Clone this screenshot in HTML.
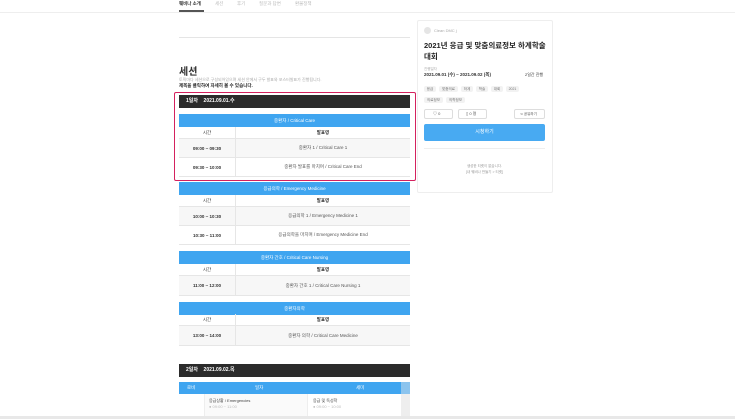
<!DOCTYPE html>
<html><head><meta charset="utf-8"><style>
*{margin:0;padding:0;box-sizing:border-box}
body{width:735px;height:419px;overflow:hidden;background:#fff;font-family:"Liberation Sans","Noto Sans CJK KR",sans-serif;position:relative;color:#222}
.a{position:absolute}
.blk{position:absolute;left:179px;width:231px;height:13px;background:#2b2b2b;color:#fff;font-size:5px;font-weight:bold;line-height:13px;padding-left:7px}
.blu{position:absolute;left:179px;width:231px;height:13px;background:#3fa5f0;color:#fff;font-size:4.5px;line-height:13px;text-align:center}
.row{position:absolute;left:179px;width:231px;font-size:4.5px;color:#555;border-bottom:1px solid #e6e6e6}
.row .t{position:absolute;left:0;width:57px;text-align:center;top:0;bottom:0;border-right:1px solid #e6e6e6;display:flex;align-items:center;justify-content:center;font-weight:bold;color:#333}
.row .n{position:absolute;left:57px;right:0;top:0;bottom:0;display:flex;align-items:center;justify-content:center}
.hd .n{font-weight:bold;color:#333}.hd .t{font-weight:normal}
.bg{background:#f7f7f7}
.tag{position:absolute;height:6px;font-size:3.5px;line-height:6px;color:#777;background:#f2f2f2;border-radius:2px;text-align:center}
</style></head><body>
<div class="a" style="left:0;top:12px;width:735px;border-top:1px solid #eee"></div>
<div class="a" style="left:179px;top:1px;font-size:4.5px;color:#333;font-weight:bold">웨비나 소개</div>
<div class="a" style="left:179px;top:10px;width:25px;height:2px;background:#555"></div>
<div class="a" style="left:215px;top:1px;font-size:4.5px;color:#bbb">세션</div>
<div class="a" style="left:237px;top:1px;font-size:4.5px;color:#bbb">후기</div>
<div class="a" style="left:259px;top:1px;font-size:4.5px;color:#bbb">질문과 답변</div>
<div class="a" style="left:295px;top:1px;font-size:4.5px;color:#bbb">환불정책</div>
<div class="a" style="left:179px;top:37px;width:231px;border-top:1px solid #e5e5e5"></div>
<div class="a" style="left:179px;top:63px;font-size:10px;font-weight:bold;color:#333">세션</div>
<div class="a" style="left:179px;top:77px;font-size:4px;color:#aaa">토픽마다 세션으로 구성되어있으며 세션 안에서 구두 발표와 포스터발표가 진행됩니다.</div>
<div class="a" style="left:179px;top:83px;font-size:4.5px;font-weight:bold;color:#222">제목을 클릭하여 자세히 볼 수 있습니다.</div>
<div class="a" style="left:174px;top:92px;width:242px;height:89px;border:1.5px solid #d4215e;border-radius:2px"></div>

<div class="blk" style="top:95px">1일차 &nbsp;&nbsp; 2021.09.01.수</div>
<div class="blu" style="top:114px">중환자 / Critical Care</div>
<div class="row hd" style="top:127px;height:12px"><div class="t">시간</div><div class="n">발표명</div></div>
<div class="row bg" style="top:139px;height:19px"><div class="t">09:00 ~ 09:30</div><div class="n">중환자 1 / Critical Care 1</div></div>
<div class="row" style="top:158px;height:19px"><div class="t">09:30 ~ 10:00</div><div class="n">중환자 발표를 마치며 / Critical Care End</div></div>

<div class="blu" style="top:182px">응급의학 / Emergency Medicine</div>
<div class="row hd" style="top:195px;height:12px"><div class="t">시간</div><div class="n">발표명</div></div>
<div class="row bg" style="top:207px;height:19px"><div class="t">10:00 ~ 10:30</div><div class="n">응급의학 1 / Emergency Medicine 1</div></div>
<div class="row" style="top:226px;height:19px"><div class="t">10:30 ~ 11:00</div><div class="n">응급의학을 마치며 / Emergency Medicine End</div></div>

<div class="blu" style="top:251px">중환자 간호 / Critical Care Nursing</div>
<div class="row hd" style="top:264px;height:12px"><div class="t">시간</div><div class="n">발표명</div></div>
<div class="row bg" style="top:276px;height:20px"><div class="t">11:00 ~ 12:00</div><div class="n">중환자 간호 1 / Critical Care Nursing 1</div></div>

<div class="blu" style="top:302px">중환자의학</div>
<div class="row hd" style="top:314px;height:12px"><div class="t">시간</div><div class="n">발표명</div></div>
<div class="row bg" style="top:326px;height:20px"><div class="t">13:00 ~ 14:00</div><div class="n">중환자 의학 / Critical Care Medicine</div></div>

<div class="blk" style="top:364px">2일차 &nbsp;&nbsp; 2021.09.02.목</div>
<div class="a" style="left:179px;top:382px;width:222px;height:12px;background:#3fa5f0;color:#fff;font-size:4.5px;line-height:12px">
<span class="a" style="left:8px">로비</span><span class="a" style="left:76px">일자</span><span class="a" style="left:177px">세미</span></div>
<div class="a" style="left:401px;top:382px;width:9px;height:12px;background:#8cc4ee"></div>
<div class="a" style="left:401px;top:394px;width:9px;height:25px;background:#eee"></div>
<div class="a" style="left:204px;top:394px;width:104px;height:25px;border-left:1px solid #eee;border-right:1px solid #eee;background:#fafafa"></div>
<div class="a" style="left:209px;top:398px;font-size:4px;color:#444">응급상황 / Emergencies<br><span style="color:#bbb">● 09:00 ~ 11:00</span></div>
<div class="a" style="left:313px;top:398px;font-size:4px;color:#444">응급 및 독성학<br><span style="color:#bbb">● 09:00 ~ 10:00</span></div>
<div class="a" style="left:0;top:416px;width:735px;height:3px;background:#e8e8e8"></div>

<div class="a" style="left:417px;top:20px;width:136px;height:173px;border:1px solid #eee;border-radius:2px"></div>
<div class="a" style="left:424px;top:27px;width:7px;height:7px;border-radius:50%;background:#e5e5e5"></div>
<div class="a" style="left:434px;top:28px;font-size:4px;color:#aaa">Clean DMC j</div>
<div class="a" style="left:424px;top:40px;width:125px;font-size:7.5px;font-weight:bold;line-height:11px;color:#222">2021년 응급 및 맞춤의료정보 하계학술대회</div>
<div class="a" style="left:424px;top:67px;font-size:3.5px;color:#aaa">진행일자</div>
<div class="a" style="left:424px;top:72px;font-size:4.5px;font-weight:bold;color:#333">2021.09.01 (수) ~ 2021.09.02 (목)</div>
<div class="a" style="left:525px;top:72px;font-size:4px;color:#333">2일간 진행</div>
<div class="tag" style="left:424px;top:86px;width:12px">응급</div>
<div class="tag" style="left:439px;top:86px;width:19px">맞춤의료</div>
<div class="tag" style="left:461px;top:86px;width:12px">하계</div>
<div class="tag" style="left:476px;top:86px;width:12px">학술</div>
<div class="tag" style="left:491px;top:86px;width:12px">대회</div>
<div class="tag" style="left:506px;top:86px;width:13px">2021</div>
<div class="tag" style="left:424px;top:97px;width:19px">의료정보</div>
<div class="tag" style="left:446px;top:97px;width:19px">의학정보</div>
<div class="a" style="left:424px;top:109px;width:29px;height:10px;border:1px solid #ddd;border-radius:2px;font-size:4px;color:#555;line-height:8px;padding-left:8px">♡ 0</div>
<div class="a" style="left:458px;top:109px;width:29px;height:10px;border:1px solid #ddd;border-radius:2px;font-size:4px;color:#555;line-height:8px;padding-left:7px">▯ 0 명</div>
<div class="a" style="left:514px;top:109px;width:31px;height:10px;border:1px solid #ddd;border-radius:2px;font-size:3.5px;color:#555;line-height:8px;padding-left:5px">⋖ 공유하기</div>
<div class="a" style="left:424px;top:124px;width:121px;height:17px;background:#48aaf2;border-radius:2px;color:#fff;font-size:5px;line-height:17px;text-align:center">시청하기</div>
<div class="a" style="left:424px;top:148px;width:121px;border-top:1px solid #eee"></div>
<div class="a" style="left:424px;top:163px;width:121px;text-align:center;font-size:3.5px;color:#999;line-height:6px">생성한 티켓이 없습니다.<br>[내 웨비나 만들기 &gt; 티켓]</div>
</body></html>
